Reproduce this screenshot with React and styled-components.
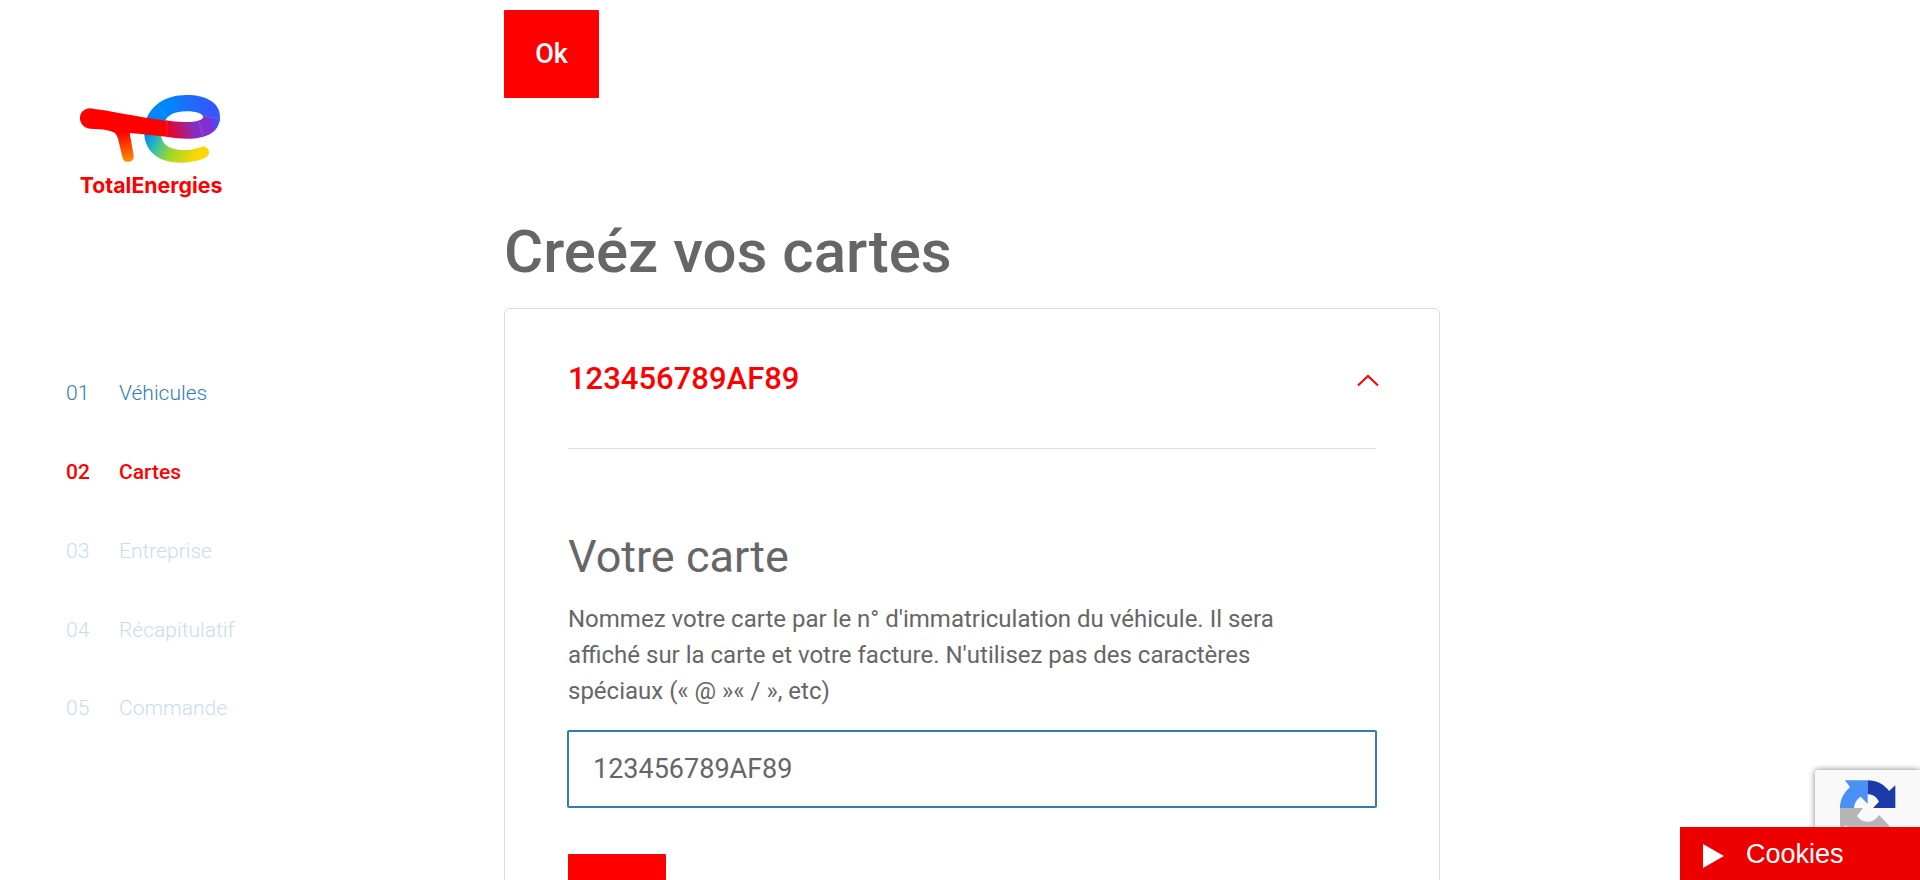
import React from "react";
import styled, { createGlobalStyle } from "styled-components";

const red = "#ff0000";
const grey = "#666666";
const line = "#dcdcdc";
const blue = "#2e7db8";

const GlobalStyle = createGlobalStyle`
  *, *::before, *::after { box-sizing: border-box; }
  body {
    margin: 0;
    background: #fff;
    color: ${grey};
    font-family: Roboto, "Liberation Sans", sans-serif;
  }
`;

const Page = styled.div`
  display: flex;
  align-items: flex-start;
  height: 100vh;
  overflow-y: auto;
  scrollbar-width: none;
`;

const Sidebar = styled.aside`
  flex: 0 0 504px;
  padding: 94px 64px 0;
`;

const LogoLink = styled.a`
  display: block;
  width: 142px;
  margin-left: 16px;
`;

const LogoSvg = styled.svg`
  display: block;
  width: 100%;
`;

const Steps = styled.ol`
  list-style: none;
  margin: 180px 0 0;
  padding: 0;
  display: flex;
  flex-direction: column;
  justify-content: space-between;
  height: 340px;
`;

const stepColors = { done: blue, current: red, upcoming: "#c8ddec" };

const Step = styled.a`
  display: grid;
  grid-template-columns: 53px 1fr;
  padding-left: 2px;
  font-size: 21px;
  line-height: 25px;
  font-weight: ${(p) => (p.$state === "current" ? 500 : 300)};
  color: ${(p) => stepColors[p.$state]};
  text-decoration: none;
`;

const Main = styled.main`
  flex: 0 1 936px;
  min-width: 0;
  padding: 10px 0 48px;
`;

const PrimaryButton = styled.button`
  display: block;
  height: 88px;
  min-width: ${(p) => (p.$wide ? "98px" : "95px")};
  padding: 0 30px;
  border: 0;
  border-radius: 1px;
  background: ${red};
  color: #fff;
  font: 500 27px/32px Roboto, sans-serif;
  cursor: pointer;
`;

const Title = styled.h1`
  margin: 118px 0 20px;
  font-size: 60px;
  line-height: 72px;
  font-weight: 500;
`;

const Card = styled.section`
  padding: 0 63px 48px;
  border: 1px solid ${line};
  border-radius: 6px;
`;

const CardToggle = styled.button`
  display: flex;
  align-items: center;
  justify-content: space-between;
  width: 100%;
  height: 140px;
  padding: 0;
  border: 0;
  border-bottom: 1px solid ${line};
  background: none;
  color: ${red};
  font: 500 31px/40px Roboto, sans-serif;
  cursor: pointer;
`;

const Chevron = styled.svg`
  width: 24px;
  height: 14px;
  margin: 2px -4px 0 0;
`;

const FieldTitle = styled.label`
  display: block;
  margin-top: 80px;
  font-size: 45px;
  line-height: 56px;
`;

const Help = styled.p`
  max-width: 730px;
  margin: 16px 0 22px;
  font-size: 24px;
  line-height: 36px;
`;

const CardInput = styled.input`
  display: block;
  width: 100%;
  height: 76px;
  margin-bottom: 47px;
  padding: 0 24px;
  border: 1px solid ${blue};
  border-radius: 1px;
  box-shadow: 0 0 0 1px ${blue};
  outline: 0;
  background: #fff;
  color: ${grey};
  font: 400 27px/32px Roboto, sans-serif;
`;

const Captcha = styled.div`
  position: fixed;
  right: 0;
  bottom: 30px;
  width: 105px;
  height: 80px;
  padding: 10px 0 0 25px;
  border-radius: 3px 0 0 0;
  background: #f9f9f9;
  box-shadow: 0 0 6px #808080;
`;

const CookieButton = styled.button`
  position: fixed;
  right: 0;
  bottom: 0;
  display: flex;
  align-items: center;
  gap: 22px;
  width: 240px;
  height: 53px;
  padding: 0 0 0 23px;
  border: 0;
  background: #ed0000;
  color: #fff;
  font: 400 27px/32px "Liberation Sans", Arial, sans-serif;
  cursor: pointer;
`;

const PlayIcon = styled.svg`
  width: 21px;
  height: 24px;
  margin-top: 5px;
`;

function Logo() {
  return (
    <LogoSvg viewBox="60 40 426 322" role="img" aria-label="TotalEnergies">
      <defs>
        <linearGradient id="top" gradientUnits="userSpaceOnUse" x1="320" y1="0" x2="450" y2="0">
          <stop offset="0" stopColor="#0087fa" />
          <stop offset="1" stopColor="#3358ff" />
        </linearGradient>
        <linearGradient id="bar" gradientUnits="userSpaceOnUse" x1="320" y1="150" x2="475" y2="108">
          <stop offset="0" stopColor="#f0001c" />
          <stop offset="0.55" stopColor="#8030c8" />
          <stop offset="0.8" stopColor="#8030d4" />
          <stop offset="1" stopColor="#3358ff" />
        </linearGradient>
        <linearGradient id="low" gradientUnits="userSpaceOnUse" x1="260" y1="162" x2="405" y2="240">
          <stop offset="0" stopColor="#0087fa" />
          <stop offset="0.25" stopColor="#33c0a8" />
          <stop offset="0.55" stopColor="#9fd82c" />
          <stop offset="1" stopColor="#ffd700" />
        </linearGradient>
        <linearGradient id="leg" gradientUnits="userSpaceOnUse" x1="190" y1="155" x2="205" y2="240">
          <stop offset="0" stopColor="#ff0000" />
          <stop offset="1" stopColor="#ff8a00" />
        </linearGradient>
      </defs>
      <path fill="url(#low)" d="M253 150C250 204 289 246 360 246C392 246 419 239 435 231A17 17 0 0 0 427 198C414 201 399 208 374 208C333 208 304 194 303 160Z" />
      <path fill="url(#top)" d="M256 125C269 76 315 43 380 43C440 43 480 67 480 108L478 124L430 112C430 99 412 92 378 92C347 92 321 102 314 125Z" />
      <path fill="url(#bar)" d="M480 108C480 151 445 174 382 174C360 174 340 171 318 168L318 119C336 122 353 124 374 124C412 124 430 118 430 106Z" />
      <path fill="url(#leg)" d="M140 145C159 149 168 156 174 174L188 232A17 17 0 0 0 221 225L208 150Z" />
      <path fill="#ff0000" d="M98 84C151 90 201 102 258 111L320 120L320 168C282 165 245 160 208 157L160 155C148 149 134 147 118 146L90 144C50 139 49 84 92 83Z" />
      <path stroke="#fff" strokeOpacity="0.4" fill="none" d="M293 73L320 108M430 107L480 113M418 125L429 166M321 121L320 168" />
      <text x="59" y="338" fill="#ff0000" fontFamily="Inter, sans-serif" fontWeight="700" fontSize="64">
        TotalEnergies
      </text>
    </LogoSvg>
  );
}

function CaptchaIcon() {
  return (
    <svg width="56" height="56" viewBox="541 90 168 168" aria-hidden="true">
      <path fill="#4a90f5" d="M541 174C541 149 552 128 571 112L556 91H624V161L603 140C592 147 584 158 583 174Z" />
      <path fill="#1c3aa9" d="M624 91C650 91 673 103 688 123L707 106V174H640L658 155C649 140 640 133 624 133Z" />
      <path fill="#b5b5b5" d="M541 174H610L592 198C600 209 610 215 624 215C640 215 651 206 658 195L690 228C672 247 650 257 624 257C598 257 575 246 559 226L541 243Z" />
    </svg>
  );
}

const steps = [
  ["01", "Véhicules", "done"],
  ["02", "Cartes", "current"],
  ["03", "Entreprise", "upcoming"],
  ["04", "Récapitulatif", "upcoming"],
  ["05", "Commande", "upcoming"],
];

export default function App() {
  return (
    <>
      <GlobalStyle />
      <Page>
        <Sidebar>
          <LogoLink href="#">
            <Logo />
          </LogoLink>
          <nav>
            <Steps>
              {steps.map(([number, label, state]) => (
                <li key={number}>
                  <Step href="#" $state={state} aria-current={state === "current" ? "step" : undefined}>
                    <span>{number}</span>
                    <span>{label}</span>
                  </Step>
                </li>
              ))}
            </Steps>
          </nav>
        </Sidebar>
        <Main>
          <PrimaryButton type="button">Ok</PrimaryButton>
          <Title>Creéz vos cartes</Title>
          <Card>
            <CardToggle type="button" aria-expanded="true">
              <span>123456789AF89</span>
              <Chevron viewBox="0 0 24 14" fill="none" stroke="currentColor" strokeWidth="2" aria-hidden="true">
                <path d="M2 12.5L12 3L22 12.5" />
              </Chevron>
            </CardToggle>
            <FieldTitle htmlFor="card-name">Votre carte</FieldTitle>
            <Help id="card-help">
              Nommez votre carte par le n° d'immatriculation du véhicule. Il sera affiché sur la carte et votre
              facture. N'utilisez pas des caractères spéciaux (« @ »« / », etc)
            </Help>
            <CardInput id="card-name" type="text" defaultValue="123456789AF89" aria-describedby="card-help" />
            <PrimaryButton type="button" $wide>Ok</PrimaryButton>
          </Card>
        </Main>
      </Page>
      <Captcha>
        <CaptchaIcon />
      </Captcha>
      <CookieButton type="button">
        <PlayIcon viewBox="0 0 21 24" fill="currentColor" aria-hidden="true">
          <path d="M0 0L21 12L0 24Z" />
        </PlayIcon>
        <span>Cookies</span>
      </CookieButton>
    </>
  );
}
